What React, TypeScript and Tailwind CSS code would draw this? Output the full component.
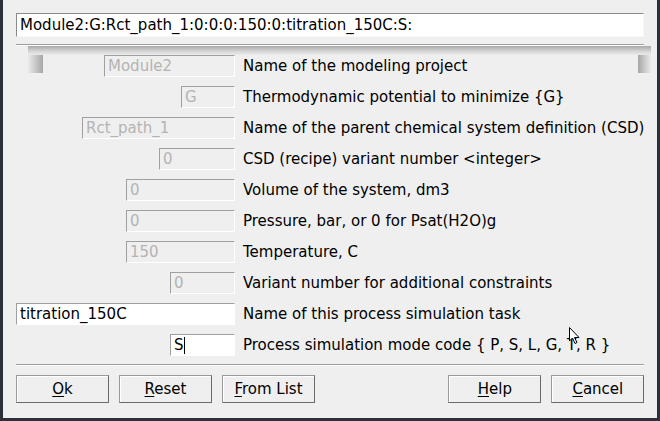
import React from 'react';

type Row = { value: string; label: string; width: string; enabled?: boolean; caret?: boolean };

const ROWS: Row[] = [
  { value: 'Module2', label: 'Name of the modeling project', width: 'w-[131px]' },
  { value: 'G', label: 'Thermodynamic potential to minimize {G}', width: 'w-[54px]' },
  { value: 'Rct_path_1', label: 'Name of the parent chemical system definition (CSD)', width: 'w-[153px]' },
  { value: '0', label: 'CSD (recipe) variant number <integer>', width: 'w-[76px]' },
  { value: '0', label: 'Volume of the system, dm3', width: 'w-[109px]' },
  { value: '0', label: 'Pressure, bar, or 0 for Psat(H2O)g', width: 'w-[109px]' },
  { value: '150', label: 'Temperature, C', width: 'w-[109px]' },
  { value: '0', label: 'Variant number for additional constraints', width: 'w-[65px]' },
  { value: 'titration_150C', label: 'Name of this process simulation task', width: 'w-[219px]', enabled: true },
  { value: 'S', label: 'Process simulation mode code { P, S, L, G, T, R }', width: 'w-[65px]', enabled: true, caret: true },
];

const Button = ({ mn, rest }: { mn: string; rest: string }) => (
  <button className="w-[93px] h-[28px] bg-[#efefef] border border-[#9a9a9a] border-r-[#6a6a6a] border-b-[#6a6a6a] shadow-[inset_1px_1px_0_#ffffff] text-black text-[15px] leading-none">
    <span className="underline underline-offset-2">{mn}</span>
    {rest}
  </button>
);

const Separator = () => (
  <div className="flex flex-col">
    <div className="h-px bg-[#a0a0a0]" />
    <div className="h-px bg-white" />
  </div>
);

export default function App() {
  return (
    <div className="w-[660px] h-[421px] bg-[#2b303a] flex font-['DejaVu_Sans',sans-serif]">
      <div className="relative ml-[3px] mr-[4px] mb-[3px] flex-1 bg-[#efefef] px-[13px] pt-[13px] flex flex-col">
        <div className="h-[24px] bg-white border border-[#8a8a8a] border-r-[#f8f8f8] border-b-[#f8f8f8] flex items-center px-[3px] text-[15px] text-black">
          Module2:G:Rct_path_1:0:0:0:150:0:titration_150C:S:
        </div>

        <div className="mt-[7px]">
          <Separator />
        </div>

        {/* scroll viewport top shadow */}
        <div className="ml-[12px] mr-[-7px] h-[9px] bg-[#cfcfcf] bg-[linear-gradient(180deg,#a9a9a9_0%,#d6d6d6_60%,#ebebeb_100%)]" />

        <div className="relative">
          <div className="absolute left-[12px] top-0 w-[15px] h-[18px] bg-[#c8c8c8] bg-[linear-gradient(90deg,#ebebeb,#a6a6a6)]" />
          <div className="absolute right-[-7px] top-0 w-[13px] h-[18px] bg-[#c8c8c8] bg-[linear-gradient(90deg,#a6a6a6,#ebebeb)]" />

          <div className="relative flex flex-col gap-[9px]">
            {ROWS.map((r, i) => (
              <div key={i} className="flex items-center h-[22px]">
                <div className="w-[219px] flex justify-end">
                  <div
                    className={`${r.width} h-[22px] border border-[#a0a0a0] border-r-white border-b-white flex items-center px-[3px] text-[15px] ${
                      r.enabled ? 'bg-white text-black' : 'bg-[#efefef] text-[#b4b4b4]'
                    }`}
                  >
                    {r.value}
                    {r.caret && <span className="w-px h-[17px] bg-black" />}
                  </div>
                </div>
                <span className="ml-[8px] text-[15px] text-black whitespace-nowrap">{r.label}</span>
              </div>
            ))}
          </div>
        </div>

        <div className="mt-[8px]">
          <Separator />
        </div>

        <div className="mt-[9px] flex">
          <div className="flex gap-[10px]">
            <Button mn="O" rest="k" />
            <Button mn="R" rest="eset" />
            <Button mn="F" rest="rom List" />
          </div>
          <div className="ml-auto flex gap-[10px]">
            <Button mn="H" rest="elp" />
            <Button mn="C" rest="ancel" />
          </div>
        </div>

        {/* mouse pointer */}
        <svg className="absolute left-[566px] top-[327px]" width="12" height="18" viewBox="0 0 12 18">
          <path d="M0.5 0.5 L0.5 14 L3.5 11 L6 16.5 L8 15.5 L5.5 10.5 L10 10.5 Z" fill="#ffffff" stroke="#000000" strokeWidth="1" />
        </svg>
      </div>
    </div>
  );
}
